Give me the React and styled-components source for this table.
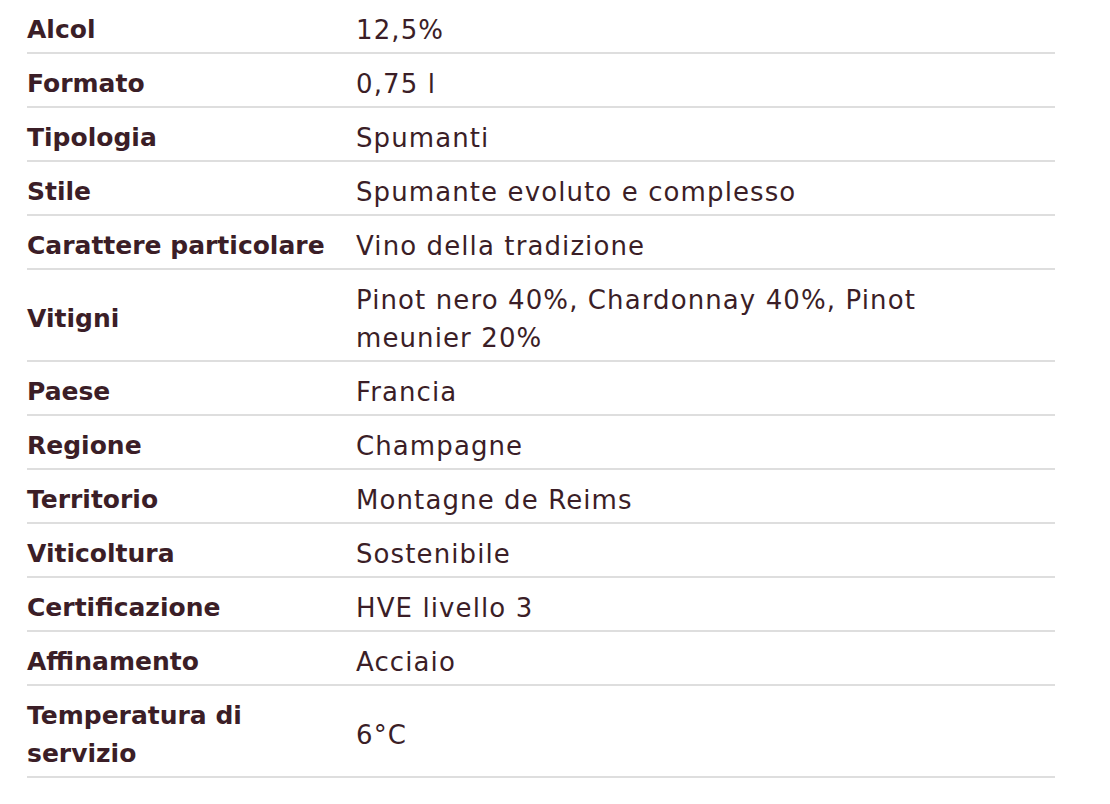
import styled, { createGlobalStyle } from "styled-components";

const GlobalStyle = createGlobalStyle`
  body {
    margin: 0;
    background: #ffffff;
    font-family: 'DejaVu Sans', 'Open Sans', sans-serif;
  }
`;

const specs = [
  ["Alcol", "12,5%"],
  ["Formato", "0,75 l"],
  ["Tipologia", "Spumanti"],
  ["Stile", "Spumante evoluto e complesso"],
  ["Carattere particolare", "Vino della tradizione"],
  ["Vitigni", "Pinot nero 40%, Chardonnay 40%, Pinot meunier 20%"],
  ["Paese", "Francia"],
  ["Regione", "Champagne"],
  ["Territorio", "Montagne de Reims"],
  ["Viticoltura", "Sostenibile"],
  ["Certificazione", "HVE livello 3"],
  ["Affinamento", "Acciaio"],
  ["Temperatura di servizio", "6°C"],
];

const SpecsTable = styled.div`
  width: 1028px;
  margin-left: 27px;
  color: #3b1e27;
`;

const SpecRow = styled.div`
  display: grid;
  grid-template-columns: 329px 1fr;
  align-items: center;
  border-bottom: 2px solid #dedede;
  padding: 11px 0 3px;
`;

const Label = styled.div`
  font-weight: 700;
  font-size: 25px;
  line-height: 38px;
  padding-right: 12px;
`;

const Value = styled.div`
  font-weight: 400;
  font-size: 26px;
  letter-spacing: 1.1px;
  line-height: 38px;
  max-width: 600px;
`;

const App = () => {
  return (
    <>
      <GlobalStyle />
      <SpecsTable>
        {specs.map(([label, value]) => (
          <SpecRow key={label}>
            <Label>{label}</Label>
            <Value>{value}</Value>
          </SpecRow>
        ))}
      </SpecsTable>
    </>
  );
};

export default App;
